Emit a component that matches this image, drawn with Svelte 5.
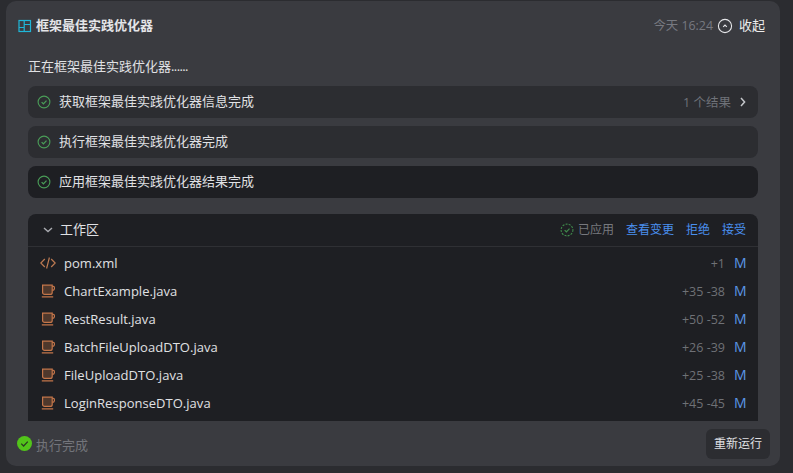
<script lang="ts">
	const steps = [
		{ label: '获取框架最佳实践优化器信息完成', result: '1 个结果', dark: false },
		{ label: '执行框架最佳实践优化器完成', result: '', dark: false },
		{ label: '应用框架最佳实践优化器结果完成', result: '', dark: true }
	];

	const files = [
		{ name: 'pom.xml', kind: 'xml', added: '+1', removed: '' },
		{ name: 'ChartExample.java', kind: 'java', added: '+35', removed: '-38' },
		{ name: 'RestResult.java', kind: 'java', added: '+50', removed: '-52' },
		{ name: 'BatchFileUploadDTO.java', kind: 'java', added: '+26', removed: '-39' },
		{ name: 'FileUploadDTO.java', kind: 'java', added: '+25', removed: '-38' },
		{ name: 'LoginResponseDTO.java', kind: 'java', added: '+45', removed: '-45' }
	];
</script>

<div class="page">
	<section class="card">
		<header class="head">
			<svg class="logo" width="14" height="14" viewBox="0 0 14 14" fill="none" stroke="#1fb6d8" stroke-width="1.2">
				<rect x="1" y="1.5" width="11.5" height="11" />
				<path d="M6.2 1.5v11M1 8.5h5.2M6.2 5.5h6.3" />
			</svg>
			<h1>框架最佳实践优化器</h1>
			<span class="time">今天 16:24</span>
			<svg class="collapse" width="16" height="16" viewBox="0 0 16 16" fill="none" stroke="#e4e5e8" stroke-width="1.1">
				<circle cx="8" cy="8" r="6.6" />
				<path d="M6.2 8.8 8 7l1.8 1.8" stroke-width="1.2" />
			</svg>
			<span class="fold">收起</span>
		</header>

		<div class="body">
			<p class="intro">正在框架最佳实践优化器<span class="dots">......</span></p>

			<div class="steps">
				{#each steps as step}
					<div class="step" class:dark={step.dark}>
						<svg width="14" height="14" viewBox="0 0 14 14" fill="none" stroke="#4a9e58" stroke-width="1.1">
							<circle cx="7" cy="7" r="5.9" />
							<path d="M4.6 7.1 6.4 8.8 9.5 5.6" stroke-width="1.2" />
						</svg>
						<span class="step-label">{step.label}</span>
						{#if step.result}
							<span class="result">{step.result}</span>
							<svg class="chev" width="8" height="10" viewBox="0 0 8 10" fill="none" stroke="#c4c6ca" stroke-width="1.5">
								<path d="M2 1l3.6 4L2 9" />
							</svg>
						{/if}
					</div>
				{/each}
			</div>

			<div class="workspace">
				<div class="ws-head">
					<svg width="10" height="8" viewBox="0 0 10 8" fill="none" stroke="#a9abb0" stroke-width="1.4">
						<path d="M1 2l4 3.6L9 2" />
					</svg>
					<span class="ws-title">工作区</span>
					<svg class="applied-icon" width="14" height="14" viewBox="0 0 14 14" fill="none" stroke="#3f8a4b" stroke-width="1.1">
						<circle cx="7" cy="7" r="5.9" stroke-dasharray="2 1.2" />
						<path d="M4.6 7.1 6.4 8.8 9.5 5.6" stroke-width="1.2" />
					</svg>
					<span class="applied">已应用</span>
					<span class="link">查看变更</span>
					<span class="link">拒绝</span>
					<span class="link">接受</span>
				</div>
				<ul class="files">
					{#each files as file}
						<li class="file">
							<span class="file-icon">
								{#if file.kind === 'xml'}
									<svg width="16" height="14" viewBox="0 0 16 14" fill="none" stroke="#bd7a52" stroke-width="1.2">
										<path d="M4.8 3 .8 7l4 4M11.2 3l4 4-4 4M9.4 1.5 6.6 12.5" />
									</svg>
								{:else}
									<svg width="16" height="16" viewBox="0 0 16 16" fill="none" stroke="#c4764a" stroke-width="1.2">
										<path d="M2.6 2.2h9.6v7.2a2 2 0 0 1-2 2H4.6a2 2 0 0 1-2-2z" fill="#4f382c" />
										<path d="M12.2 3.4h1.2a1 1 0 0 1 1 1v1.2a1.6 1.6 0 0 1-1.6 1.6h-.6" />
										<path d="M1.8 13.8h11.4" />
									</svg>
								{/if}
							</span>
							<span class="file-name">{file.name}</span>
							<span class="diff">{file.added}{#if file.removed}&nbsp;{file.removed}{/if}</span>
							<span class="status">M</span>
						</li>
					{/each}
				</ul>
			</div>
		</div>

		<footer class="foot">
			<svg width="15" height="15" viewBox="0 0 15 15">
				<circle cx="7.5" cy="7.5" r="7.5" fill="#52c41a" />
				<path d="M4.2 7.6 6.6 10l4.2-4.4" fill="none" stroke="#2b3a22" stroke-width="1.3" />
			</svg>
			<span class="done">执行完成</span>
			<button class="rerun"><span>重新运行</span></button>
		</footer>
	</section>
</div>

<style>
	:global(body) {
		margin: 0;
		background: #2b2c30;
	}

	.page {
		height: 473px;
		padding: 1px 13px 7px 6px;
		box-sizing: border-box;
		overflow: hidden;
		font-family: 'Open Sans', 'Noto Sans CJK SC', sans-serif;
		font-size: 13px;
		color: #e0e1e4;
	}

	.card {
		height: 100%;
		display: flex;
		flex-direction: column;
		background: #3a3b40;
		border-radius: 10px;
		overflow: hidden;
	}

	.head {
		flex: none;
		height: 50px;
		display: flex;
		align-items: center;
		padding: 0 15px 0 12px;
	}

	.logo {
		margin-right: 4px;
	}

	h1 {
		margin: 0;
		flex: 1;
		padding-bottom: 3px;
		font-size: 13px;
		font-weight: 700;
		color: #e4e5e8;
	}

	.time {
		padding-bottom: 2px;
		color: #777980;
		font-size: 12.4px;
	}

	.collapse {
		margin: 0 6px 0 4px;
	}

	.fold {
		padding-bottom: 3px;
		color: #eceded;
	}

	.body {
		flex: 1;
		min-height: 0;
		display: flex;
		flex-direction: column;
		padding: 0 22px;
	}

	.intro {
		margin: 0;
		height: 35px;
		line-height: 30px;
	}

	.dots {
		letter-spacing: -0.6px;
	}

	.steps {
		display: flex;
		flex-direction: column;
		gap: 8px;
	}

	.step {
		height: 32px;
		display: flex;
		align-items: center;
		padding: 0 11px 0 9px;
		background: #2c2d31;
		border-radius: 8px;
	}

	.step.dark {
		background: #1e1f23;
	}

	.step-label {
		flex: 1;
		margin-left: 8px;
		padding-bottom: 3px;
	}

	.result {
		padding-bottom: 2px;
		color: #6f7279;
		font-size: 12.5px;
	}

	.chev {
		margin-left: 8px;
	}

	.workspace {
		flex: 1;
		min-height: 0;
		margin-top: 16px;
		background: #1e1f23;
		border-radius: 8px 8px 0 0;
	}

	.ws-head {
		height: 32px;
		display: flex;
		align-items: center;
		padding: 0 12px 0 15px;
		border-bottom: 1px solid #2f3034;
	}

	.ws-title {
		flex: 1;
		margin-left: 7px;
		padding-bottom: 3px;
	}

	.applied-icon {
		margin-right: 4px;
	}

	.applied {
		padding-bottom: 2px;
		color: #77797e;
		font-size: 12px;
	}

	.link {
		margin-left: 12px;
		padding-bottom: 2px;
		color: #4a90f0;
		font-size: 12px;
	}

	.files {
		list-style: none;
		margin: 0;
		padding: 2px 0 0;
	}

	.file {
		height: 28px;
		display: flex;
		align-items: center;
		padding: 0 12px;
	}

	.file-icon {
		width: 24px;
		display: flex;
		align-items: center;
	}

	.file-name {
		flex: 1;
		letter-spacing: 0.03px;
	}

	.diff {
		color: #6f7176;
		font-size: 12.5px;
	}

	.status {
		width: 12px;
		margin-left: 9px;
		padding-bottom: 2px;
		color: #5b96e6;
		font-size: 14px;
		text-align: right;
	}

	.foot {
		flex: none;
		height: 45px;
		display: flex;
		align-items: center;
		padding: 0 10px 0 11px;
	}

	.done {
		flex: 1;
		margin-left: 4px;
		padding-top: 1px;
		color: #73757b;
	}

	.rerun {
		height: 30px;
		width: 64px;
		padding: 0;
		border: 0;
		border-radius: 6px;
		background: #2c2d31;
		color: #e0e1e4;
		font: inherit;
		font-size: 12px;
	}

	.rerun span {
		display: block;
		padding-bottom: 2px;
	}
</style>
